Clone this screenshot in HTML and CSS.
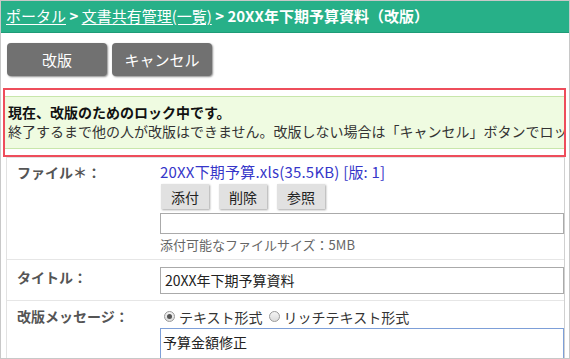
FILE: index.html
```
<!DOCTYPE html>
<html lang="ja">
<head>
    <meta charset="UTF-8">
    <title>文書共有管理 - 改版</title>
    <link rel="stylesheet" href="styles.css">
</head>
<body>
<div class="frame">

    <!-- パンくず -->
    <div class="crumbs">
        <a href="#">ポータル</a> <b>&gt;</b> <a href="#">文書共有管理(一覧)</a> <b>&gt;</b> <b>20XX年下期予算資料（改版）</b>
    </div>

    <!-- 操作ボタン -->
    <div class="toolbar">
        <button class="btn-main">改版</button>
        <button class="btn-main">キャンセル</button>
    </div>

    <!-- ロック中のお知らせ -->
    <div class="lock">
        <div class="lock-inner">
            <strong>現在、改版のためのロック中です。</strong><br>
            終了するまで他の人が改版はできません。改版しない場合は「キャンセル」ボタンでロッ
        </div>
    </div>

    <!-- 入力フォーム -->
    <div class="form">
        <div class="row row-file">
            <div class="label">ファイル＊：</div>
            <div class="field">
                <a class="file-link" href="#">20XX下期予算.xls(35.5KB) [版: 1]</a>
                <div class="file-btns">
                    <button class="btn-sub">添付</button>
                    <button class="btn-sub">削除</button>
                    <button class="btn-sub">参照</button>
                </div>
                <div class="text-box"></div>
                <div class="hint">添付可能なファイルサイズ：5MB</div>
            </div>
        </div>
        <div class="row row-title">
            <div class="label">タイトル：</div>
            <div class="field">
                <div class="text-box tall">20XX年下期予算資料</div>
            </div>
        </div>
        <div class="row row-msg">
            <div class="label">改版メッセージ：</div>
            <div class="field">
                <div class="radios">
                    <span class="radio checked"></span><span class="radio-text">テキスト形式</span>
                    <span class="radio"></span><span class="radio-text">リッチテキスト形式</span>
                </div>
                <div class="text-area">予算金額修正</div>
            </div>
        </div>
    </div>

</div>
</body>
</html>
```

FILE: styles.css
```
body {
    margin: 0;
    padding: 0;
    font-family: "Noto Sans CJK JP", "Noto Sans", sans-serif;
    background-color: #fff;
    color: #333;
}

/* 外枠 */
.frame {
    width: 570px;
    height: 359px;
    box-sizing: border-box;
    border: 1px solid #c8c8c8;
    overflow: hidden;
}

/* パンくず */
.crumbs {
    height: 31px;
    line-height: 30px;
    padding-left: 5px;
    background-color: #27b088;
    border-bottom: 1px solid #1f9b77;
    color: #fff;
    font-size: 15px;
    white-space: nowrap;
}

.crumbs a {
    color: #fff;
    text-decoration: underline;
    text-underline-offset: 2px;
}

/* 操作ボタン */
.toolbar {
    display: flex;
    gap: 5px;
    padding: 10px 0 12px 6px;
}

.btn-main {
    width: 100px;
    height: 33px;
    border: none;
    border-radius: 4px;
    background-color: #717171;
    color: #fff;
    font-family: inherit;
    font-size: 15px;
    box-shadow: 1px 1px 2px rgba(0, 0, 0, 0.45);
}

/* ロック中のお知らせ */
.lock {
    margin: 0 3px 0 2px;
    padding: 6px 0;
    border: 2px solid #ee4d5b;
    overflow: hidden;
}

.lock-inner {
    padding: 6px 0 7px 3px;
    line-height: 19px;
    font-size: 14px;
    white-space: nowrap;
    background-color: #effbe1;
    border-top: 1px solid #c8e6ab;
    border-bottom: 1px solid #c8e6ab;
    color: #333;
}

.lock-inner strong {
    color: #111;
}

/* 入力フォーム */
.form {
    margin: 0 4px 0 5px;
    border-top: 1px solid #e2e2e2;
    border-left: 1px solid #e2e2e2;
    border-right: 1px solid #d0d0d0;
}

.row {
    display: flex;
    border-bottom: 1px solid #e6e6e6;
}

.label {
    width: 143px;
    padding-left: 10px;
    line-height: 20px;
    font-size: 14px;
    font-weight: bold;
    color: #555;
}

.field {
    flex: 1;
    font-size: 14px;
    min-width: 0;
}

.row-file {
    padding: 4px 0 5px;
}

.file-link {
    display: block;
    line-height: 20px;
    font-size: 15px;
    letter-spacing: 0.2px;
    color: #3636c9;
    text-decoration: none;
}

.file-btns {
    display: flex;
    gap: 10px;
    margin: 2px 0 0 1px;
}

.btn-sub {
    width: 48px;
    height: 25px;
    padding: 0;
    border: none;
    background-color: #e1e1e1;
    color: #222;
    font-family: inherit;
    font-size: 14px;
    box-shadow: 1px 1px 2px rgba(0, 0, 0, 0.35);
}

.text-box {
    height: 21px;
    box-sizing: border-box;
    margin-top: 4px;
    border: 1px solid #aaa;
    padding: 0 4px;
    line-height: 24px;
    color: #222;
}

.text-box.tall {
    height: 27px;
    margin-top: 0;
}

.hint {
    margin-top: 2px;
    line-height: 18px;
    font-size: 13px;
    color: #666;
}

.row-title {
    padding: 7px 0 6px;
}

.row-msg {
    padding-top: 5px;
    border-bottom: none;
}

.radios {
    display: flex;
    align-items: center;
    height: 21px;
    padding-left: 4px;
    color: #333;
}

.radio {
    width: 11px;
    height: 11px;
    box-sizing: border-box;
    border: 1px solid #9a9a9a;
    border-radius: 50%;
    background: linear-gradient(#f4f4f4, #dcdcdc);
    margin-right: 4px;
    position: relative;
}

.radio.checked::after {
    content: "";
    position: absolute;
    left: 2px;
    top: 2px;
    width: 5px;
    height: 5px;
    border-radius: 50%;
    background-color: #555;
}

.radio-text {
    margin-right: 6px;
}

.text-area {
    height: 40px;
    margin-top: 1px;
    border: 1px solid #7d9fd8;
    padding: 3px 2px;
    line-height: 20px;
    color: #222;
}
```
